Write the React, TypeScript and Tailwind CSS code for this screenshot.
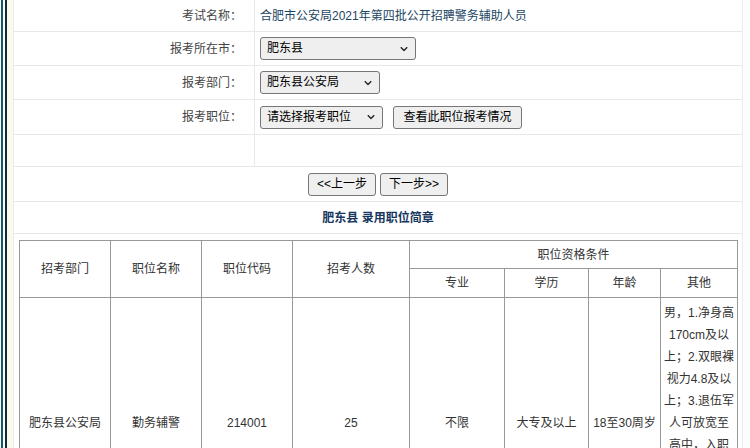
import type { ReactNode } from "react";

const font = { fontFamily: '"Liberation Sans", "Noto Sans CJK SC", sans-serif' };

function Chevron() {
  return (
    <svg
      className="pointer-events-none absolute right-[8px] top-1/2 -translate-y-1/2"
      width="8"
      height="5"
      viewBox="0 0 8 5"
    >
      <path d="M0.8 0.8 L4 4 L7.2 0.8" fill="none" stroke="#222" strokeWidth="1.4" />
    </svg>
  );
}

function Select({ value, width }: { value: string; width: string }) {
  return (
    <div className={`relative ${width}`}>
      <select
        defaultValue={value}
        className="h-[23px] w-full appearance-none rounded-[3px] border border-[#767676] bg-[#efefef] pl-[6px] text-[12px] leading-[21px] text-black outline-none"
      >
        <option>{value}</option>
      </select>
      <Chevron />
    </div>
  );
}

function Button({ children, width }: { children: ReactNode; width: string }) {
  return (
    <button
      type="button"
      className={`h-[23px] ${width} rounded-[3px] border border-[#767676] bg-[#efefef] text-[12px] leading-[21px] text-black`}
    >
      {children}
    </button>
  );
}

function FormRow({ label, height, children }: { label: string; height: string; children?: ReactNode }) {
  return (
    <div className={`grid grid-cols-[241px_1fr] border-b border-[#e8e8e8] ${height}`}>
      <div className="flex items-center justify-end border-r border-[#e8e8e8] pr-[12px] text-[#444]">{label}</div>
      <div className="flex items-center gap-[10px] pl-[5px]">{children}</div>
    </div>
  );
}

const otherLines = [
  "男，1.净身高",
  "170cm及以",
  "上；2.双眼裸",
  "视力4.8及以",
  "上；3.退伍军",
  "人可放宽至",
  "高中，入职",
  "后需签订5",
  "年服务期协",
  "议，服务期",
  "内不得离职",
];

export default function App() {
  return (
    <div className="flex h-[448px] w-[750px] overflow-hidden bg-white text-[12px]" style={font}>
      <div className="w-px bg-white" />
      <div className="w-[2px] bg-[#0e5a6e]" />
      <div className="w-[2px] bg-white" />
      <div className="w-[2px] bg-[#0b2a3a]" />
      <div className="w-[6px] bg-[#fafaee]" />
      <div className="w-[730px] border-x border-[#ececec]">
        <FormRow label="考试名称：" height="h-[32px]">
          <span className="text-[#1c4663]">合肥市公安局2021年第四批公开招聘警务辅助人员</span>
        </FormRow>
        <FormRow label="报考所在市：" height="h-[34px]">
          <Select value="肥东县" width="w-[156px]" />
        </FormRow>
        <FormRow label="报考部门：" height="h-[34px]">
          <Select value="肥东县公安局" width="w-[120px]" />
        </FormRow>
        <FormRow label="报考职位：" height="h-[35px]">
          <Select value="请选择报考职位" width="w-[123px]" />
          <Button width="w-[129px]">查看此职位报考情况</Button>
        </FormRow>
        <FormRow label="" height="h-[32px]" />
        <div className="flex h-[35px] items-center justify-center gap-[4px] border-b border-[#e8e8e8]">
          <Button width="w-[68px]">&lt;&lt;上一步</Button>
          <Button width="w-[68px]">下一步&gt;&gt;</Button>
        </div>
        <div className="flex h-[32px] items-center justify-center border-b border-[#e8e8e8] font-bold text-[#17375e]">
          肥东县 录用职位简章
        </div>
        <div className="px-[5px] pt-[6px]">
          <table className="w-[718px] table-fixed border-collapse text-center text-[#333]">
            <colgroup>
              <col className="w-[91px]" />
              <col className="w-[91px]" />
              <col className="w-[91px]" />
              <col className="w-[117px]" />
              <col className="w-[95px]" />
              <col className="w-[84px]" />
              <col className="w-[72px]" />
              <col className="w-[77px]" />
            </colgroup>
            <thead>
              <tr className="h-[28px]">
                <th rowSpan={2} className="border border-[#999] font-normal">招考部门</th>
                <th rowSpan={2} className="border border-[#999] font-normal">职位名称</th>
                <th rowSpan={2} className="border border-[#999] font-normal">职位代码</th>
                <th rowSpan={2} className="border border-[#999] font-normal">招考人数</th>
                <th colSpan={4} className="border border-[#999] font-normal">职位资格条件</th>
              </tr>
              <tr className="h-[29px]">
                <th className="border border-[#999] font-normal">专业</th>
                <th className="border border-[#999] font-normal">学历</th>
                <th className="border border-[#999] font-normal">年龄</th>
                <th className="border border-[#999] font-normal">其他</th>
              </tr>
            </thead>
            <tbody>
              <tr>
                <td className="border border-[#999]">肥东县公安局</td>
                <td className="border border-[#999]">勤务辅警</td>
                <td className="border border-[#999]">214001</td>
                <td className="border border-[#999]">25</td>
                <td className="border border-[#999]">不限</td>
                <td className="border border-[#999]">大专及以上</td>
                <td className="border border-[#999] whitespace-nowrap">18至30周岁</td>
                <td className="border border-[#999] py-[4px] leading-[22px]">
                  {otherLines.map((line) => (
                    <div key={line}>{line}</div>
                  ))}
                </td>
              </tr>
            </tbody>
          </table>
        </div>
      </div>
      <div className="flex-1 bg-white" />
    </div>
  );
}
